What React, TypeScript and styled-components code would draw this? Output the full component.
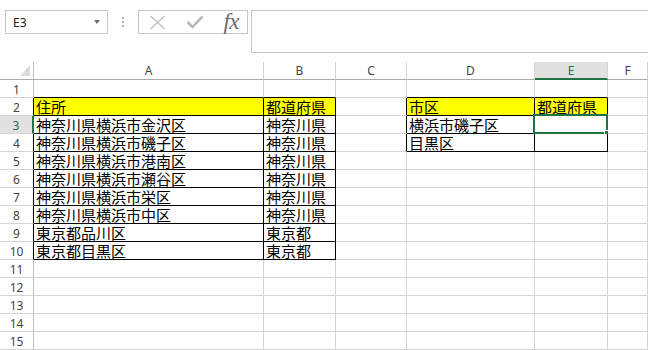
import React from 'react';
import styled, { createGlobalStyle } from 'styled-components';

const GREEN = '#217346';
const GRID = '#d4d4d4';

const GlobalStyle = createGlobalStyle`
  html, body {
    margin: 0;
    padding: 0;
    background: #fff;
  }
  body {
    font-family: 'Noto Sans', 'Noto Sans CJK JP', sans-serif;
    overflow: hidden;
  }
`;

const Page = styled.div`
  width: 648px;
  height: 350px;
  overflow: hidden;
  display: flex;
  flex-direction: column;
`;

const FormulaBar = styled.div`
  height: 62px;
  box-sizing: border-box;
  padding: 10px 0 0 5px;
  display: flex;
  align-items: flex-start;
`;

const NameBox = styled.div`
  width: 103px;
  height: 24px;
  box-sizing: border-box;
  border: 1px solid #c6c6c6;
  display: flex;
  align-items: center;
  justify-content: space-between;
  padding: 0 7px 0 7px;
  font-size: 12px;
  color: #222;
`;

const Caret = styled.span`
  width: 0;
  height: 0;
  border-left: 3.5px solid transparent;
  border-right: 3.5px solid transparent;
  border-top: 4px solid #707070;
`;

const Grip = styled.div`
  width: 30px;
  height: 24px;
  display: flex;
  flex-direction: column;
  align-items: center;
  justify-content: center;
  gap: 2px;

  & span {
    width: 2px;
    height: 2px;
    background: #b4b4b4;
  }
`;

const FxBox = styled.div`
  width: 110px;
  height: 24px;
  box-sizing: border-box;
  border: 1px solid #c6c6c6;
  display: flex;
  align-items: center;
  justify-content: space-between;
  padding: 0 8px 0 10px;
`;

const FxLabel = styled.span`
  font-family: 'Liberation Serif', 'DejaVu Serif', serif;
  font-style: italic;
  font-size: 23px;
  color: #6a6a6a;
  line-height: 1;
  margin-top: -1px;
  letter-spacing: -0.5px;
`;

const FormulaInput = styled.div`
  flex: 1;
  height: 43px;
  margin-left: 3px;
  margin-right: -2px;
  box-sizing: border-box;
  border: 1px solid #c6c6c6;
`;

const Sheet = styled.div`
  display: grid;
  grid-template-columns: 34px 230px 72px 71px 128px 73px 1fr;
  grid-auto-rows: 18px;
`;

const Corner = styled.div`
  box-sizing: border-box;
  border-right: 1px solid #bdbdbd;
  border-bottom: 1px solid #ababab;
  display: flex;
  align-items: flex-end;
  justify-content: flex-end;
  padding: 0 3px 3px 0;
`;

const ColHead = styled.div<{ $sel?: boolean }>`
  box-sizing: border-box;
  border-right: 1px solid ${GRID};
  border-bottom: ${p => (p.$sel ? `2px solid ${GREEN}` : '1px solid #ababab')};
  background: ${p => (p.$sel ? '#e1e1e1' : '#fff')};
  color: ${p => (p.$sel ? GREEN : '#444')};
  font-size: 12px;
  display: flex;
  align-items: center;
  justify-content: center;
`;

const RowHead = styled.div<{ $sel?: boolean; $edge?: boolean }>`
  box-sizing: border-box;
  border-right: ${p =>
    p.$sel ? `2px solid ${GREEN}` : `1px solid ${p.$edge ? '#000' : '#bdbdbd'}`};
  border-bottom: 1px solid ${GRID};
  background: ${p => (p.$sel ? '#e1e1e1' : '#fff')};
  color: ${p => (p.$sel ? GREEN : '#444')};
  font-size: 12px;
  line-height: 12px;
  display: flex;
  align-items: flex-end;
  justify-content: center;
  padding-bottom: 1px;
`;

const Cell = styled.div<{ $fill?: string; $r?: string; $b?: string }>`
  position: relative;
  box-sizing: border-box;
  min-width: 0;
  border-right: 1px solid ${p => p.$r ?? GRID};
  border-bottom: 1px solid ${p => p.$b ?? GRID};
  background: ${p => p.$fill ?? '#fff'};
  font-family: 'Noto Sans CJK JP', 'Noto Sans CJK SC', sans-serif;
  font-size: 15px;
  line-height: 17px;
  color: #000;
  padding: 0 2px;
  display: flex;
  align-items: flex-end;
  white-space: nowrap;
`;

const Selection = styled.div`
  position: absolute;
  left: -2px;
  top: -2px;
  right: -1px;
  bottom: -1px;
  border: 2px solid ${GREEN};
  pointer-events: none;

  &::after {
    content: '';
    position: absolute;
    right: -5px;
    bottom: -5px;
    width: 5px;
    height: 5px;
    background: ${GREEN};
    border: 1px solid #fff;
  }
`;

const cols = ['A', 'B', 'C', 'D', 'E', 'F'];
const YELLOW = '#ffff00';

const data: Record<string, string> = {
  A2: '住所',
  B2: '都道府県',
  D2: '市区',
  E2: '都道府県',
  A3: '神奈川県横浜市金沢区',
  A4: '神奈川県横浜市磯子区',
  A5: '神奈川県横浜市港南区',
  A6: '神奈川県横浜市瀬谷区',
  A7: '神奈川県横浜市栄区',
  A8: '神奈川県横浜市中区',
  A9: '東京都品川区',
  A10: '東京都目黒区',
  B3: '神奈川県',
  B4: '神奈川県',
  B5: '神奈川県',
  B6: '神奈川県',
  B7: '神奈川県',
  B8: '神奈川県',
  B9: '東京都',
  B10: '東京都',
  D3: '横浜市磯子区',
  D4: '目黒区',
};

// bordered ranges: A2:B10 and D2:E4
const inBox = (c: string, r: number) =>
  (['A', 'B'].includes(c) && r >= 2 && r <= 10) || (['D', 'E'].includes(c) && r >= 2 && r <= 4);

function XIcon() {
  return (
    <svg width="17" height="15" viewBox="0 0 17 15">
      <path d="M1.5 1 L15.5 14 M15.5 1 L1.5 14" stroke="#c4c4c4" strokeWidth="1.6" fill="none" />
    </svg>
  );
}

function CheckIcon() {
  return (
    <svg width="18" height="14" viewBox="0 0 18 14">
      <path d="M1.5 7 L6.5 12 L16.5 1.5" stroke="#b8b8b8" strokeWidth="2.6" fill="none" />
    </svg>
  );
}

function CornerMark() {
  return (
    <svg width="10" height="11" viewBox="0 0 10 11">
      <polygon points="10,0 10,11 0,11" fill="#dcdcdc" />
    </svg>
  );
}

export default function App() {
  const rows = Array.from({ length: 15 }, (_, i) => i + 1);

  return (
    <Page>
      <GlobalStyle />
      <FormulaBar>
        <NameBox>
          <span>E3</span>
          <Caret />
        </NameBox>
        <Grip>
          <span />
          <span />
          <span />
        </Grip>
        <FxBox>
          <XIcon />
          <CheckIcon />
          <FxLabel>fx</FxLabel>
        </FxBox>
        <FormulaInput />
      </FormulaBar>

      <Sheet>
        <Corner>
          <CornerMark />
        </Corner>
        {cols.map(c => (
          <ColHead key={c} $sel={c === 'E'}>
            {c}
          </ColHead>
        ))}

        {rows.map(r => (
          <React.Fragment key={r}>
            <RowHead $sel={r === 3} $edge={r >= 2 && r <= 10}>
              {r}
            </RowHead>
            {cols.map((c, ci) => {
              const boxed = inBox(c, r);
              const next = cols[ci + 1];
              const right = boxed || (next && inBox(next, r)) ? '#000' : undefined;
              const bottom = boxed || inBox(c, r + 1) ? '#000' : undefined;
              const key = `${c}${r}`;
              return (
                <Cell key={key} $fill={r === 2 && boxed ? YELLOW : undefined} $r={right} $b={bottom}>
                  {data[key]}
                  {key === 'E3' && <Selection />}
                </Cell>
              );
            })}
          </React.Fragment>
        ))}
      </Sheet>
    </Page>
  );
}
